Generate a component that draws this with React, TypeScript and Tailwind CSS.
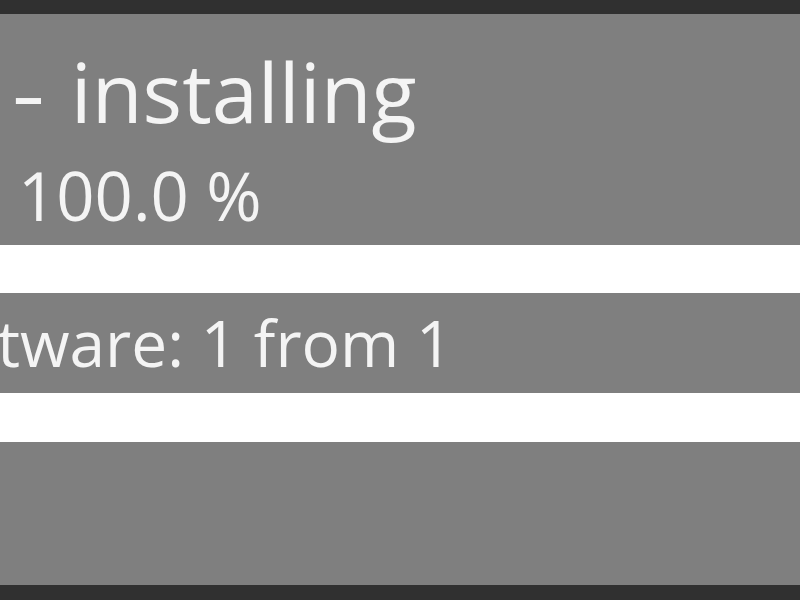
export default function App() {
  return (
    <div className="flex h-[600px] w-[800px] flex-col overflow-hidden bg-[#303030] text-[#f4f4f4] [font-family:'Open_Sans',sans-serif]">
      <div className="h-[14px] shrink-0" />
      <div className="flex flex-1 flex-col bg-[#7f7f7f]">
        <div className="h-[231px] shrink-0">
          <div className="mt-[35px] flex items-baseline whitespace-nowrap text-[83px] leading-none">
            <span className="ml-[15px] scale-x-125">-</span>
            <span className="ml-[29px]">installing</span>
          </div>
          <div className="mt-[30px] whitespace-nowrap pl-[18px] text-[67px] leading-none">100.0 %</div>
        </div>
        <div className="h-[48px] shrink-0 bg-white" />
        <div className="h-[100px] shrink-0 overflow-hidden pt-[18px]">
          <div className="ml-[-98px] whitespace-nowrap text-[64px] leading-none">Software: 1 from 1</div>
        </div>
        <div className="h-[49px] shrink-0 bg-white" />
        <div className="flex-1" />
      </div>
      <div className="h-[15px] shrink-0" />
    </div>
  );
}
